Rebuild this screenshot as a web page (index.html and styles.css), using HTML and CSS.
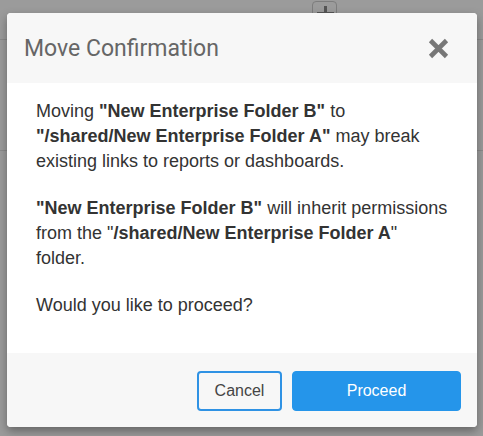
FILE: index.html
```html
<!DOCTYPE html>
<html>
<head>
<meta charset="utf-8">
<link rel="stylesheet" href="styles.css">
</head>
<body>
<div class="page">
  <div class="toolbar">
    <span class="add-btn"><span class="plus-v"></span><span class="plus-h"></span></span>
  </div>
  <div class="row"></div>
</div>
<div class="dialog">
  <div class="dialog-header">
    <h1 class="dialog-title">Move Confirmation</h1>
    <button class="close-btn" aria-label="Close">
      <svg width="21" height="21" viewBox="0 0 21 21"><path d="M2.5 2.5 L18.5 18.5 M18.5 2.5 L2.5 18.5" stroke="#777" stroke-width="4.6" stroke-linecap="butt" fill="none"/></svg>
    </button>
  </div>
  <div class="dialog-body">
    <p>Moving <b>"New Enterprise Folder B"</b> to <b>"/shared/New Enterprise Folder A"</b> may break existing links to reports or dashboards.</p>
    <p><b>"New Enterprise Folder B"</b> will inherit permissions from the "<b>/shared/New Enterprise Folder A</b>" folder.</p>
    <p>Would you like to proceed?</p>
  </div>
  <div class="dialog-footer">
    <button class="btn btn-cancel">Cancel</button>
    <button class="btn btn-proceed">Proceed</button>
  </div>
</div>
</body>
</html>
```
FILE: styles.css
```css
html, body {
  margin: 0;
  padding: 0;
}
body {
  background: #9b9b9b;
  width: 483px;
  height: 436px;
  overflow: hidden;
  position: relative;
  font-family: "Liberation Sans", Arial, sans-serif;
}
.page {
  height: 436px;
}
.toolbar {
  height: 40px;
  border-bottom: 1px solid #8a8a8a;
  padding-left: 312px;
  padding-top: 1px;
  box-sizing: border-box;
}
.add-btn {
  display: block;
  position: relative;
  width: 25px;
  height: 26px;
  border: 1px solid #7d7d7d;
  border-radius: 4px;
  box-sizing: border-box;
}
.plus-v {
  position: absolute;
  left: 11px;
  top: 4px;
  width: 3px;
  height: 16px;
  background: #555;
}
.plus-h {
  position: absolute;
  left: 4px;
  top: 10px;
  width: 17px;
  height: 3px;
  background: #555;
}
.row {
  height: 110px;
  border-bottom: 1px solid #8a8a8a;
}
.dialog {
  position: absolute;
  left: 7px;
  top: 13px;
  width: 470px;
  background: #fff;
  border-radius: 4px;
  overflow: hidden;
  box-shadow: 0 4px 10px rgba(0, 0, 0, 0.35);
}
.dialog-header {
  height: 70px;
  background: #f7f7f7;
  display: flex;
  align-items: center;
  justify-content: space-between;
  padding: 0 28px 0 17px;
  box-sizing: border-box;
}
.dialog-title {
  margin: 0;
  font-family: Roboto, "Liberation Sans", sans-serif;
  font-weight: 400;
  font-size: 23px;
  color: #666;
}
.close-btn {
  border: 0;
  background: none;
  padding: 0;
  width: 21px;
  height: 21px;
  display: flex;
}
.dialog-body {
  padding: 16px 29px 13px;
  font-size: 18px;
  line-height: 25px;
  color: #333;
}
.dialog-body p {
  margin: 0 0 22px;
}
.dialog-body b {
  font-weight: 700;
}
.dialog-footer {
  background: #f7f7f7;
  height: 74px;
  box-sizing: border-box;
  padding: 18px 16px 16px;
  display: flex;
  justify-content: flex-end;
  gap: 10px;
}
.btn {
  height: 40px;
  border-radius: 4px;
  font-family: "Liberation Sans", Arial, sans-serif;
  font-size: 16px;
  box-sizing: border-box;
  cursor: pointer;
}
.btn-cancel {
  width: 85px;
  background: #f7f7f7;
  border: 2px solid #2f92e4;
  color: #444;
}
.btn-proceed {
  width: 169px;
  background: #2595ea;
  border: 1px solid #2595ea;
  color: #fff;
}
```
